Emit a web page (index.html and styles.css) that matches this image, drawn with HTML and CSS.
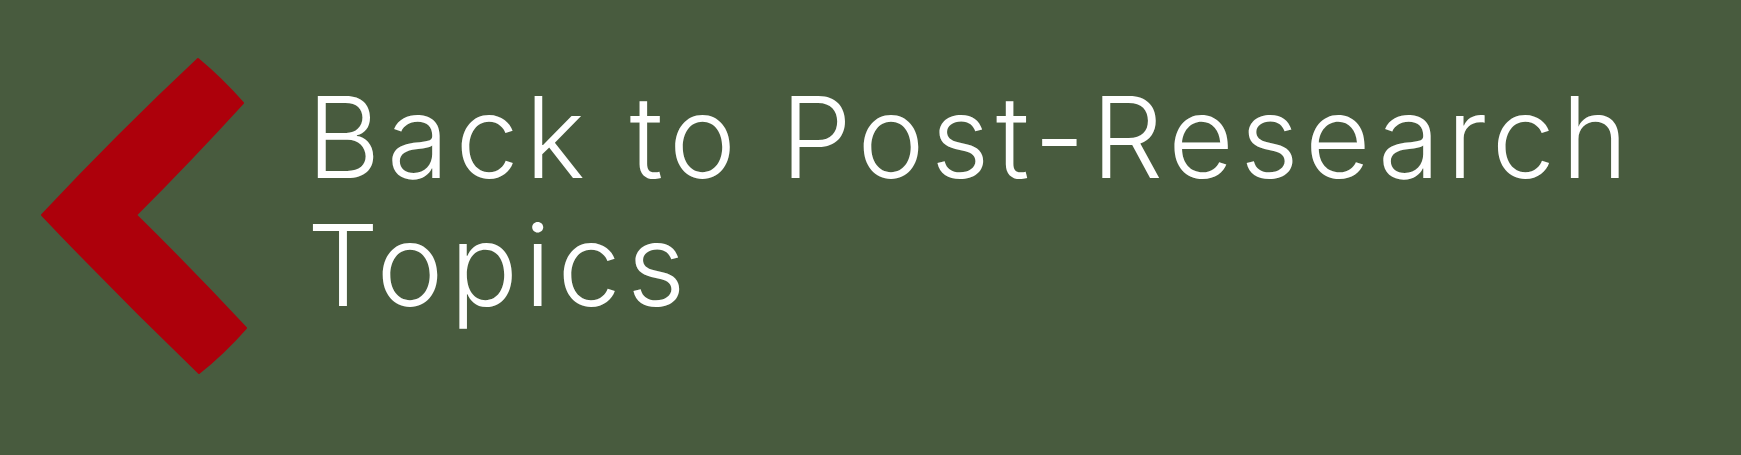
FILE: index.html
```html
<!DOCTYPE html>
<html lang="en">
<head>
<meta charset="utf-8">
<title>Back to Post-Research Topics</title>
<link rel="stylesheet" href="styles.css">
</head>
<body>
<a class="back-link" href="#">
  <svg class="back-link__chevron" viewBox="0 0 260 455" aria-hidden="true">
    <path d="M198,59 Q222,79 243,103 Q190,161 136,215 Q192,270 246,328 Q224,353 199,373 Q118,295 42,215 Q118,134 198,59 Z"/>
  </svg>
  <span class="back-link__label">Back to Post-Research Topics</span>
</a>
</body>
</html>
```

FILE: styles.css
```css
html, body {
  margin: 0;
  padding: 0;
  background: #485b3e;
}

.back-link {
  display: flex;
  align-items: flex-start;
  width: 1741px;
  height: 455px;
  background: #485b3e;
  color: #ffffff;
  text-decoration: none;
  overflow: hidden;
}

.back-link__chevron {
  flex: none;
  width: 260px;
  height: 455px;
}

.back-link__chevron path {
  fill: #ad000b;
  stroke: #ad000b;
  stroke-width: 2;
  stroke-linejoin: round;
}

.back-link__label {
  margin-left: 47px;
  padding-top: 73px;
  width: 1400px;
  font-family: "Inter", "Liberation Sans", sans-serif;
  font-weight: 300;
  font-size: 113px;
  line-height: 128px;
  letter-spacing: 6.5px;
}
```
